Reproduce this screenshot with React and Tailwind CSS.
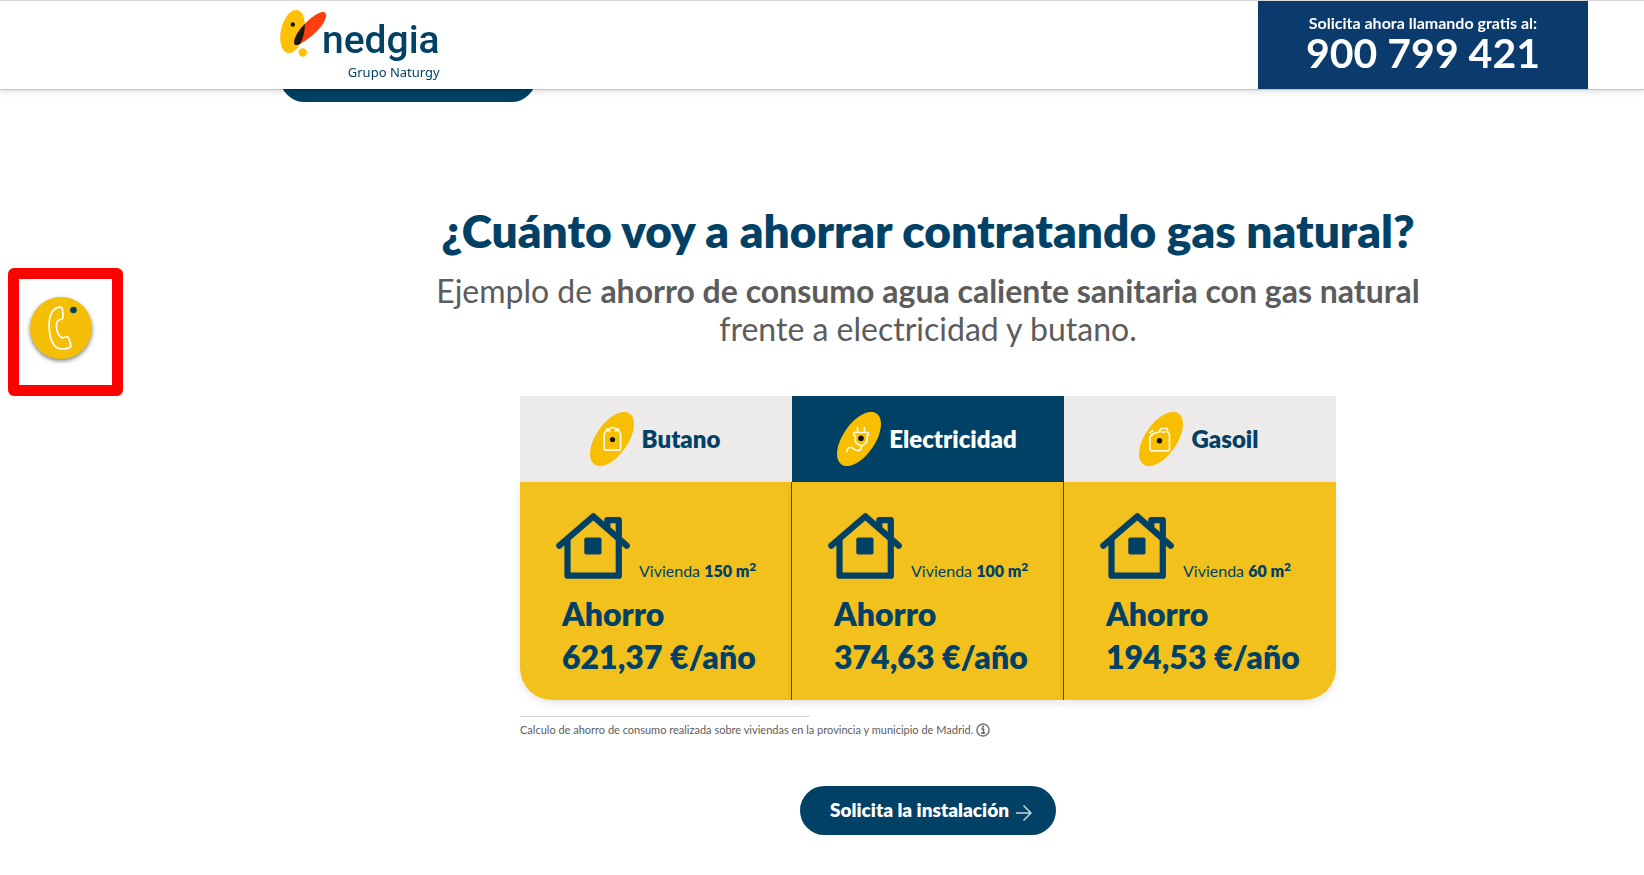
import React from "react";

function Logo() {
  return (
    <a href="#inicio" aria-label="nedgia Grupo Naturgy" className="flex items-start pt-[3px]">
      <svg className="h-14 w-12" viewBox="0 0 48 56" aria-hidden="true">
        <defs>
          <clipPath id="wing">
            <ellipse cx="12.500" cy="27.500" rx="11.600" ry="22" transform="rotate(13 12.5 27.5)" />
          </clipPath>
        </defs>
        <ellipse cx="12.500" cy="27.500" rx="11.600" ry="22" transform="rotate(13 12.5 27.5)" fill="#ffc107" />
        <path d="M45 8.500C48.500 12 43 22 35 29C26 37 17 43 14.800 40.500C12.600 38 16 30 22 23C30 13.500 41 6 45 8.500Z" fill="#ff3d0f" />
        <path d="M45 8.500C48.500 12 43 22 35 29C26 37 17 43 14.800 40.500C12.600 38 16 30 22 23C30 13.500 41 6 45 8.500Z" fill="#1a1715" clipPath="url(#wing)" />
        <circle cx="12.800" cy="20.500" r="2.200" fill="#1a1715" />
        <circle cx="22.700" cy="48.500" r="4.200" fill="#ffc107" />
      </svg>
      <span className="-ml-[6px] flex flex-col items-end pt-3 text-[#004165]">
        <span className="font-[Roboto,sans-serif] text-[39px] leading-[48px] font-medium">nedgia</span>
        <span className="font-['Noto_Sans',sans-serif] text-[13px] leading-4">Grupo Naturgy</span>
      </span>
    </a>
  );
}

function Header() {
  return (
    <header className="fixed inset-x-0 top-0 z-10 flex h-[89px] justify-between border-t border-[#d8d8dc] bg-white pr-14 pl-[280px] shadow-[0_1px_1px_rgba(0,0,0,0.15),0_3px_6px_rgba(0,0,0,0.12)]">
      <Logo />
      <a href="tel:900799421" className="flex w-[330px] flex-col items-center bg-[#0b3a6c] pt-3 font-bold text-white">
        <span className="text-base leading-5">Solicita ahora llamando gratis al:</span>
        <span className="text-[41px] leading-10">900 799 421</span>
      </a>
    </header>
  );
}

function Oval({ children }) {
  return (
    <svg className="h-[54px] w-11" viewBox="0 0 44 54" aria-hidden="true">
      <ellipse cx="22" cy="27" rx="16" ry="31" transform="rotate(34.6 22 27)" fill="#f7bf00" />
      <g fill="none" stroke="#fff8e0" strokeWidth="1.700" strokeLinecap="round" strokeLinejoin="round">
        {children}
      </g>
    </svg>
  );
}

function BottleIcon() {
  return (
    <Oval>
      <path d="M15.500 38.200H29.500Q30.600 38.200 30.600 37V21.500L28.500 18.500V17.200H25.500L24 15.500H21L19.500 17.200H16.500V18.500L14.200 21.500V37Q14.200 38.200 15.500 38.200ZM16.500 18.500L19.500 19M28.500 18.500L25.500 19" />
      <circle cx="22.500" cy="27.500" r="2.600" fill="#101010" stroke="none" />
    </Oval>
  );
}

function PlugIcon() {
  return (
    <Oval>
      <path d="M20.500 15.500V20M27.500 15.500V20M16.800 20.500H31.300V23.500H30V28.500Q30 30.500 28 31.500L26 33.500H22.500L20 31.500Q18.300 30.500 18.300 28.500V23.500H16.800ZM24.500 34C24.500 37 23 38.700 20.500 38.700C17 38.700 17 35.500 14 35.500C11.500 35.500 10 37 10 39.500" />
      <circle cx="24" cy="26.300" r="2.800" fill="#101010" stroke="none" />
    </Oval>
  );
}

function CanIcon() {
  return (
    <Oval>
      <path d="M11 24.500L14.500 21.500L20 20L22 16.500H28L28.800 20L30.500 22.500V37Q30.500 38.800 28.700 38.800H12.800Q11 38.800 11 37ZM10.800 20.800L13.500 18.700M22.500 20H26.500" />
      <circle cx="20.500" cy="28.800" r="2.700" fill="#101010" stroke="none" />
    </Oval>
  );
}

function HouseIcon() {
  return (
    <svg className="h-[66px] w-[74px] shrink-0" viewBox="0 0 74 66" aria-hidden="true">
      <g fill="none" stroke="#004165" strokeWidth="6.200" strokeLinejoin="round" strokeLinecap="round">
        <path d="M3.300 32.700L37.300 3.300L70.700 32.700" />
        <path d="M11.500 28V62.700H62.800V7.200H51.300V13.500" />
      </g>
      <rect x="28.300" y="24.500" width="17.200" height="17" rx="2" fill="#004165" />
    </svg>
  );
}

const plans = [
  { name: "Butano", Icon: BottleIcon, size: "150", saving: "621,37", active: false },
  { name: "Electricidad", Icon: PlugIcon, size: "100", saving: "374,63", active: true },
  { name: "Gasoil", Icon: CanIcon, size: "60", saving: "194,53", active: false },
];

function Plan({ name, Icon, size, saving, active }) {
  return (
    <article className="group flex flex-col text-[#004165]">
      <h3
        className={`flex h-[86px] items-center justify-center gap-2 pr-[2px] text-2xl font-extrabold ${
          active ? "bg-[#004165] text-white" : "bg-[#ecebea]"
        }`}
      >
        <Icon />
        {name}
      </h3>
      <div className="grow border-r border-[#2c5556] bg-[#f2c11e] px-9 pt-[31px] pb-[22px] shadow-[0_3px_8px_rgba(0,0,0,0.1)] group-first:rounded-bl-[32px] group-last:rounded-br-[32px] group-last:border-r-0">
        <div className="flex items-end gap-[9px]">
          <HouseIcon />
          <p className="whitespace-nowrap text-base leading-4">
            Vivienda{" "}
            <strong className="font-extrabold">
              {size} m<sup className="text-xs leading-none">2</sup>
            </strong>
          </p>
        </div>
        <p className="mt-[13px] whitespace-nowrap pl-[6px] text-[32px] leading-[43px] font-extrabold">
          Ahorro
          <br />
          {saving} €/año
        </p>
      </div>
    </article>
  );
}

function PhoneWidget() {
  return (
    <aside className="fixed top-[268px] left-2 z-20 flex h-32 w-[115px] justify-center rounded-md border-[11px] border-[#ff0000] bg-white pt-[18px]">
      <button
        type="button"
        aria-label="Te llamamos"
        className="mr-[9px] size-[62px] rounded-full bg-[#f5bf08] shadow-[0_2px_4px_rgba(0,0,0,0.5)]"
      >
        <svg className="size-[62px]" viewBox="0 0 62 62" aria-hidden="true">
          <path
            d="M32.500 12.500C32.200 10.500 31 9.800 28.500 10.300C22 11.500 18.500 20 19.200 31C20 44 24.500 52.500 33 52C37 51.800 40.500 51 40.800 49C41 47.500 39.500 43.500 38.500 41C38 39.700 37.500 39.500 36 40L32.500 40.800C29.500 40.500 26.800 35.500 26.500 30C26.200 26 27.500 22.800 30.500 22.500C32.500 22.300 33 21.500 33 20Z"
            fill="none"
            stroke="#fff"
            strokeWidth="1.700"
            strokeLinejoin="round"
          />
          <circle cx="43.500" cy="13" r="3.300" fill="#004165" />
        </svg>
      </button>
    </aside>
  );
}

export default function App() {
  return (
    <div className="min-h-screen bg-white font-[Lato,sans-serif]">
      <Header />
      <PhoneWidget />
      <main className="pt-[53px] pr-[68px] pb-10 pl-[280px]">
        <a href="#solicitud" aria-label="Solicita la instalación" className="block h-[49px] w-64 rounded-full bg-[#004165]" />
        <section className="flex flex-col items-center pt-[101px]">
          <h2 className="text-center text-[46px] leading-[56px] font-extrabold text-[#004165]">
            ¿Cuánto voy a ahorrar contratando gas natural?
          </h2>
          <p className="mt-[13px] text-center text-[32px] leading-[38px] font-normal text-[#5c5c5c]">
            Ejemplo de <strong className="font-bold">ahorro de consumo agua caliente sanitaria con gas natural</strong>
            <br />
            frente a electricidad y butano.
          </p>
          <div className="mt-12 w-full max-w-[816px]">
            <div className="grid grid-cols-3">
              {plans.map((plan) => (
                <Plan key={plan.name} {...plan} />
              ))}
            </div>
            <hr className="mt-4 w-[290px] border-[#d4d4d4]" />
            <p className="mt-[3px] flex items-center gap-[3px] text-[11px] leading-5 text-[#5c5c5c]">
              Calculo de ahorro de consumo realizada sobre viviendas en la provincia y municipio de Madrid.
              <svg className="size-[14px]" viewBox="0 0 14 14" aria-hidden="true">
                <circle cx="7" cy="7" r="6.100" fill="none" stroke="#777" strokeWidth="1.500" />
                <path d="M6 3.600H8M5.300 6H7.500V10M5 10.200H9.200" fill="none" stroke="#666" strokeWidth="1.600" />
              </svg>
            </p>
          </div>
          <a href="#solicitud" className="mt-[46px] flex h-[49px] items-center gap-[7px] rounded-full bg-[#004165] pr-6 pl-[30px] text-[19px] font-extrabold text-white">
            Solicita la instalación
            <svg className="mt-1 size-4" viewBox="0 0 16 16" fill="none" stroke="#c5d5de" strokeWidth="1.500" aria-hidden="true">
              <path d="M0 8H15M7.500 0.500L15 8L7.500 15.500" />
            </svg>
          </a>
        </section>
      </main>
    </div>
  );
}
